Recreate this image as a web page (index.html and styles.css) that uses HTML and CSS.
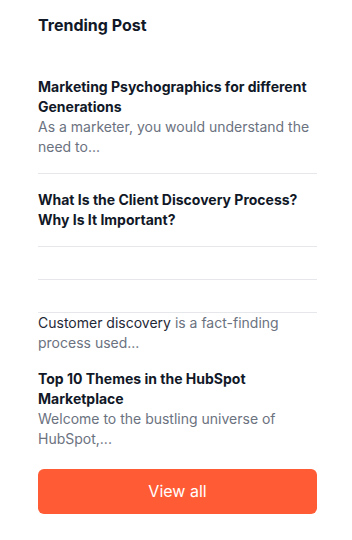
FILE: index.html
```html
<!DOCTYPE html>
<html lang="en">
<head>
    <meta charset="UTF-8">
    <meta name="viewport" content="width=device-width, initial-scale=1.0">
    <title>Trending Post</title>
    <link rel="stylesheet" href="styles.css">
</head>
<body>
    <div class="trending">
        <h2 class="trending-title">Trending Post</h2>

        <ul class="post-list">
            <li class="post">
                <a href="#" class="post-name">Marketing Psychographics for different Generations</a>
                <p class="post-desc">As a marketer, you would understand the need to...</p>
            </li>
            <li class="post">
                <a href="#" class="post-name">What Is the Client Discovery Process? Why Is It Important?</a>
            </li>
            <li class="post empty"></li>
            <li class="post empty"></li>
            <li class="post no-top no-border">
                <p class="post-desc"><span class="dark">Customer discovery</span> is a fact-finding process used...</p>
            </li>
            <li class="post no-top no-border last">
                <a href="#" class="post-name">Top 10 Themes in the HubSpot Marketplace</a>
                <p class="post-desc">Welcome to the bustling universe of HubSpot,...</p>
            </li>
        </ul>

        <a href="#" class="view-all">View all</a>
    </div>
</body>
</html>
```

FILE: styles.css
```css
body {
    margin: 0;
    background-color: #fff;
    font-family: Inter, "Noto Sans", sans-serif;
}
.trending {
    width: 279px;
    margin-left: 38px;
    padding-top: 13px;
}
.trending-title {
    margin: 0 0 24px;
    font-size: 16px;
    line-height: 24px;
    font-weight: 700;
    color: #111827;
}
.post-list {
    list-style: none;
    margin: 0 0 20px;
    padding: 0;
}
.post {
    padding: 16px 0;
    border-bottom: 1px solid #e5e7eb;
}
.post.no-top {
    padding-top: 0;
}
.post.no-border {
    border-bottom: none;
}
.post.last {
    padding-bottom: 0;
}
.post-name {
    display: block;
    font-size: 14px;
    line-height: 20px;
    font-weight: 700;
    color: #111827;
    text-decoration: none;
}
.post-desc {
    margin: 0;
    font-size: 14px;
    line-height: 20px;
    color: #6b7280;
}
.dark {
    color: #1f2937;
}
.view-all {
    display: block;
    height: 45px;
    line-height: 45px;
    border-radius: 6px;
    background-color: #ff5c35;
    color: #fff;
    text-align: center;
    font-size: 16px;
    text-decoration: none;
}
```
